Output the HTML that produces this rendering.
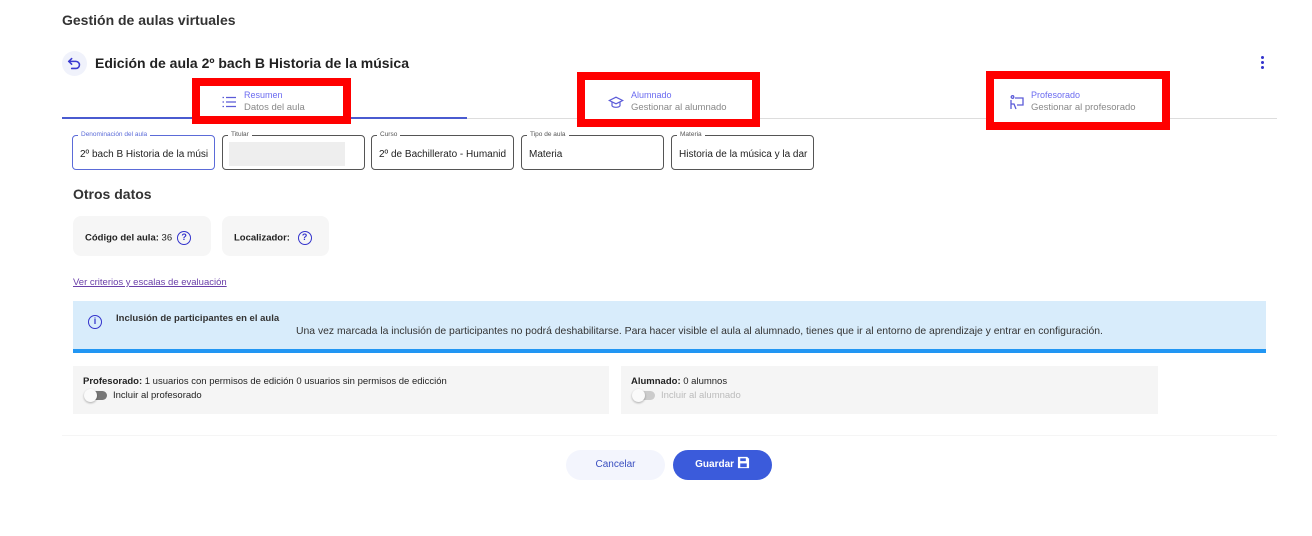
<!DOCTYPE html>
<html><head><meta charset="utf-8"><style>
*{box-sizing:border-box;margin:0;padding:0}
body{width:1312px;height:536px;background:#fff;font-family:"Liberation Sans",sans-serif;color:#222;position:relative;overflow:hidden}
.a{position:absolute;white-space:nowrap}
.red{position:absolute;border:8px solid #ff0000;background:#fff}
.fld{position:absolute;top:135px;height:35px;width:143px;border:1px solid #555;border-radius:4px;font-size:10px;color:#222;white-space:nowrap}
.fld .t{position:absolute;left:7px;top:13px;width:130px;overflow:hidden}
.fld span{position:absolute;top:-5px;left:5px;background:#fff;font-size:6.5px;line-height:8px;color:#555;padding:0 3px}
.chip{position:absolute;top:216px;height:40px;background:#f6f6f6;border-radius:8px;font-size:9.5px;font-weight:bold;padding:15px 0 0 12px;white-space:nowrap}
.q{display:inline-block;width:14px;height:14px;border:1.5px solid #3333cc;border-radius:50%;color:#3333cc;font-size:9px;text-align:center;line-height:11px;vertical-align:middle;margin-left:5px;font-weight:bold}
.panel{position:absolute;top:366px;height:48px;background:#f5f5f5;font-size:9.5px;padding:10px 0 0 10px;white-space:nowrap}
.tg{display:inline-block;width:20px;height:9px;border-radius:5px;background:#777;vertical-align:middle;margin:0 6px 0 4px;position:relative}
.tg:before{content:"";position:absolute;left:-3px;top:-2px;width:13px;height:13px;border-radius:50%;background:#fafafa;box-shadow:0 1px 2px rgba(0,0,0,.3)}
</style></head><body>
<div class="a" style="left:62px;top:12px;font-size:14px;font-weight:bold;color:#333">Gestión de aulas virtuales</div>
<div class="a" style="left:62px;top:51px;width:25px;height:25px;border-radius:50%;background:#f0f2fb"></div>
<svg class="a" style="left:66px;top:55px" width="17" height="17" viewBox="0 0 24 24" fill="none" stroke="#3b3bd0" stroke-width="2.2" stroke-linecap="round"><path d="M8 5 4 9l4 4"/><path d="M4 9h10a5 5 0 0 1 0 10H8"/></svg>
<div class="a" style="left:95px;top:55px;font-size:14px;font-weight:bold;color:#222">Edición de aula 2º bach B Historia de la música</div>
<div class="a" style="left:1261px;top:56px;width:3px;line-height:4px;font-size:0"><div style="width:3px;height:3px;background:#3333cc;border-radius:50%;margin-bottom:2px"></div><div style="width:3px;height:3px;background:#3333cc;border-radius:50%;margin-bottom:2px"></div><div style="width:3px;height:3px;background:#3333cc;border-radius:50%"></div></div>
<div class="a" style="left:467px;top:118px;width:810px;height:1px;background:#ddd"></div>
<div class="a" style="left:62px;top:117px;width:405px;height:2px;background:#4a5bd0"></div>
<div class="red" style="left:192px;top:78px;width:159px;height:46px"></div>
<div class="red" style="left:577px;top:72px;width:183px;height:55px"></div>
<div class="red" style="left:986px;top:71px;width:184px;height:59px"></div>
<svg class="a" style="left:222px;top:96px" width="14" height="12" viewBox="0 0 14 12" stroke="#5b5bd8" stroke-width="1.2"><path d="M4 1.5h10M4 6h10M4 10.5h10"/><path d="M0.5 1.5h1.5M0.5 6h1.5M0.5 10.5h1.5"/></svg>
<div class="a" style="left:244px;top:90px;font-size:9px;color:#6b6bf0">Resumen</div>
<div class="a" style="left:244px;top:102px;font-size:9.5px;color:#888">Datos del aula</div>
<svg class="a" style="left:608px;top:95px" width="16" height="15" viewBox="0 0 24 22" fill="none" stroke="#5b5bd8" stroke-width="1.8"><path d="M12 3 2 8l10 5 10-5z"/><path d="M6 10v6c2 3 10 3 12 0v-6"/></svg>
<div class="a" style="left:631px;top:90px;font-size:9px;color:#6b6bf0">Alumnado</div>
<div class="a" style="left:631px;top:102px;font-size:9.5px;color:#888">Gestionar al alumnado</div>
<svg class="a" style="left:1010px;top:95px" width="14" height="15" viewBox="0 0 14 15" fill="none" stroke="#5b5bd8" stroke-width="1.3"><circle cx="2.5" cy="2" r="1.3"/><path d="M1 5v9M1 9h3l2 5M5 3h8v7H7"/></svg>
<div class="a" style="left:1031px;top:90px;font-size:9px;color:#6b6bf0">Profesorado</div>
<div class="a" style="left:1031px;top:102px;font-size:9.5px;color:#888">Gestionar al profesorado</div>
<div class="fld" style="left:72px;border-color:#5b6bd8"><span style="color:#5b6bd8">Denominación del aula</span><div class="t">2º bach B Historia de la músi</div></div>
<div class="fld" style="left:222px"><span>Titular</span><div style="position:absolute;left:6px;top:6px;width:116px;height:24px;background:#eee"></div></div>
<div class="fld" style="left:371px"><span>Curso</span><div class="t">2º de Bachillerato - Humanid</div></div>
<div class="fld" style="left:521px"><span>Tipo de aula</span><div class="t">Materia</div></div>
<div class="fld" style="left:671px"><span>Materia</span><div class="t">Historia de la música y la dar</div></div>
<div class="a" style="left:73px;top:186px;font-size:14px;font-weight:bold;color:#333">Otros datos</div>
<div class="chip" style="left:73px;width:138px">Código del aula: <span style="font-weight:normal">36</span><span class="q">?</span></div>
<div class="chip" style="left:222px;width:107px">Localizador: <span class="q">?</span></div>
<div class="a" style="left:73px;top:277px;font-size:9.5px;color:#6a3fa8;text-decoration:underline">Ver criterios y escalas de evaluación</div>
<div class="a" style="left:73px;top:301px;width:1193px;height:52px;background:#d8ecfb;border-bottom:4px solid #2196f3"></div>
<div class="a" style="left:88px;top:315px;width:14px;height:14px;border:1.5px solid #3333cc;border-radius:50%;color:#3333cc;font-size:9px;font-weight:bold;text-align:center;line-height:11px">i</div>
<div class="a" style="left:116px;top:313px;font-size:9.5px;font-weight:bold;color:#333">Inclusión de participantes en el aula</div>
<div class="a" style="left:296px;top:326px;font-size:10.4px;color:#333">Una vez marcada la inclusión de participantes no podrá deshabilitarse. Para hacer visible el aula al alumnado, tienes que ir al entorno de aprendizaje y entrar en configuración.</div>
<div class="panel" style="left:73px;width:536px"><b>Profesorado:</b> 1 usuarios con permisos de edición 0 usuarios sin permisos de edicción<br><div style="margin-top:3px"><span class="tg"></span>Incluir al profesorado</div></div>
<div class="panel" style="left:621px;width:537px"><b>Alumnado:</b> 0 alumnos<br><div style="margin-top:3px;color:#bbb"><span class="tg" style="background:#ccc"></span>Incluir al alumnado</div></div>
<div class="a" style="left:62px;top:435px;width:1215px;height:1px;background:#f5f5f5"></div>
<div class="a" style="left:566px;top:450px;width:99px;height:30px;border-radius:15px;background:#f3f5fd;color:#3a4fc0;font-size:10px;text-align:center;line-height:30px">Cancelar</div>
<div class="a" style="left:673px;top:450px;width:99px;height:30px;border-radius:15px;background:#3b5bdb;color:#fff;font-size:10px;font-weight:bold;text-align:center;line-height:30px">Guardar <svg width="13" height="13" viewBox="0 0 14 14" style="vertical-align:-2px"><path d="M1 1h10l2 2v10H1z" fill="#fff"/><rect x="3.5" y="2.5" width="6" height="3" fill="#3b5bdb"/><rect x="3.5" y="8" width="7" height="4" fill="#3b5bdb"/></svg></div>
</body></html>
